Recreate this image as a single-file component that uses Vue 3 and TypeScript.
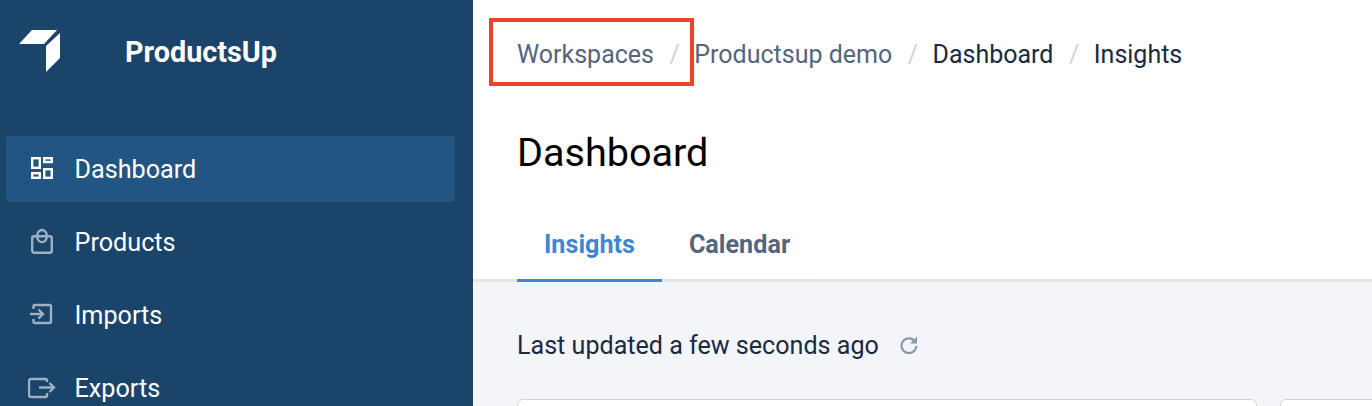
<script setup lang="ts">
interface NavItem { label: string; active?: boolean; icon: string }
const nav: NavItem[] = [
  { label: 'Dashboard', active: true, icon: 'dash' },
  { label: 'Products', icon: 'bag' },
  { label: 'Imports', icon: 'imp' },
  { label: 'Exports', icon: 'exp' },
]
</script>

<template>
  <div class="app">
    <aside class="side">
      <div class="brand">
        <svg class="logo" width="44" height="44" viewBox="0 0 44 44">
          <path d="M2 16L15 2H40L27 16Z" fill="#fff" />
          <path d="M43 5V30L29 44V18Z" fill="#fff" />
        </svg>
        <span class="brand-name">ProductsUp</span>
      </div>
      <nav class="nav">
        <a v-for="n in nav" :key="n.label" class="item" :class="{ active: n.active }">
          <svg class="ico" width="28" height="28" viewBox="0 0 28 28" fill="none" stroke-width="2.4">
            <g v-if="n.icon === 'dash'" stroke="#fff">
              <rect x="4.200" y="3.200" width="7.600" height="9.600" />
              <rect x="16.200" y="3.200" width="7.600" height="3.800" />
              <rect x="4.200" y="18.200" width="7.600" height="4.600" />
              <rect x="16.200" y="14.200" width="7.600" height="8.600" />
            </g>
            <g v-else-if="n.icon === 'bag'" stroke="#9fb0c4">
              <rect x="4.200" y="8.200" width="19.600" height="16.600" rx="2" />
              <path d="M9.200 8C9.200 0 18.800 0 18.800 8" />
              <path d="M9.200 8.500C9.200 16 18.800 16 18.800 8.500" />
            </g>
            <g v-else-if="n.icon === 'imp'" stroke="#9fb0c4">
              <path d="M5.500 8V5.500C5.500 4.500 6 4 7 4H21.500C22.500 4 23 4.500 23 5.500V20.500C23 21.500 22.500 22 21.500 22H7C6 22 5.500 21.500 5.500 20.500V18" />
              <path d="M2 13H15" />
              <path d="M10.500 8.500L15 13L10.500 17.500" />
            </g>
            <g v-else stroke="#9fb0c4">
              <path d="M19 8V6.500C19 5.500 18.500 5 17.500 5H3C1.800 5 1 5.800 1 7V21C1 22.200 1.800 23 3 23H17.500C18.500 23 19 22.500 19 21.500V19" />
              <path d="M11 13.500H25.500" />
              <path d="M21.500 9L26 13.500L21.500 18" />
            </g>
          </svg>
          <span>{{ n.label }}</span>
        </a>
      </nav>
    </aside>

    <main class="main">
      <header class="head">
        <div class="crumbs">
          <span class="muted">Workspaces</span><i>/</i>
          <span class="muted">Productsup demo</span><i>/</i>
          <span>Dashboard</span><i>/</i>
          <span>Insights</span>
          <div class="highlight"></div>
        </div>
        <h1>Dashboard</h1>
        <div class="tabs">
          <div class="tab on">Insights</div>
          <div class="tab">Calendar</div>
        </div>
      </header>
      <section class="body">
        <div class="updated">
          <span>Last updated a few seconds ago</span>
          <svg width="18" height="18" viewBox="0 0 18 18" fill="none" stroke="#8b98a9" stroke-width="2.200">
            <path d="M15 5.500A7.400 7.400 0 1 0 16.300 10" />
            <path d="M17 0.500V7.500H10" fill="#8b98a9" stroke="none" />
          </svg>
        </div>
        <div class="cards">
          <div class="card"></div>
          <div class="card"></div>
        </div>
      </section>
    </main>
  </div>
</template>

<style>
html, body { margin: 0; overflow: hidden; }
</style>

<style scoped>
.app {
  display: flex;
  width: 1372px;
  height: 406px;
  overflow: hidden;
  font-family: Roboto, "Liberation Sans", sans-serif;
}
.side {
  flex: 0 0 473px;
  background: #1a4469;
  color: #fff;
  box-sizing: border-box;
  padding: 0 18px 0 6px;
}
.brand {
  display: flex;
  align-items: center;
  height: 136px;
  padding: 0 0 34px 11px;
  box-sizing: border-box;
}
.logo { flex: none; margin-right: 64px; margin-top: -2px; }
.brand-name { font-size: 28.800px; font-weight: 700; line-height: 32px; margin-top: 2px; }
.nav { display: flex; flex-direction: column; gap: 7px; }
.item {
  display: flex;
  align-items: center;
  height: 66px;
  flex: none;
  padding-left: 22px;
  border-radius: 4px;
  font-size: 25.200px;
  gap: 18.500px;
  color: #fff;
}
.item.active { background: #235583; }
.ico { flex: none; }
.main { flex: 1; display: flex; flex-direction: column; min-width: 0; background: #f3f5f9; }
.head { flex: none; background: #fff; padding-left: 44px; height: 282px; box-sizing: border-box; border-bottom: 3px solid #e4e6ea; }
.crumbs {
  position: relative;
  display: flex;
  align-items: center;
  height: 36px;
  padding-top: 36px;
  font-size: 25px;
  color: #1a2a3f;
}
.crumbs .muted { color: #54657c; }
.crumbs i { font-style: normal; color: #cbd5e0; margin: 0 14.500px 0 15.500px; }
.highlight {
  position: absolute;
  left: -28px;
  top: 18px;
  width: 205px;
  height: 68px;
  border: 4px solid #e8452b;
  box-sizing: border-box;
}
h1 {
  margin: 0;
  padding-top: 55px;
  font-size: 39.600px;
  font-weight: 400;
  line-height: 52px;
  color: #000;
}
.tabs { display: flex; margin-top: 32px; height: 71px; }
.tab {
  box-sizing: border-box;
  width: 155px;
  height: 71px;
  padding-top: 18px;
  text-align: center;
  font-size: 25.200px;
  font-weight: 700;
  line-height: 32px;
  color: #54657c;
  border-bottom: 3px solid #e2e4e8;
}
.tab.on { width: 145px; color: #3f86d2; border-bottom-color: #3f86d2; }
.body { flex: 1; padding-left: 44px; }
.updated {
  display: flex;
  align-items: center;
  gap: 21px;
  height: 32px;
  margin-top: 47px;
  font-size: 25.100px;
  color: #1a2a3f;
}
.cards { display: flex; gap: 23px; margin-top: 38px; }
.card {
  flex: 0 0 740px;
  height: 80px;
  background: #fff;
  border: 1px solid #cbd5e0;
  border-radius: 6px;
  box-sizing: border-box;
}
</style>
